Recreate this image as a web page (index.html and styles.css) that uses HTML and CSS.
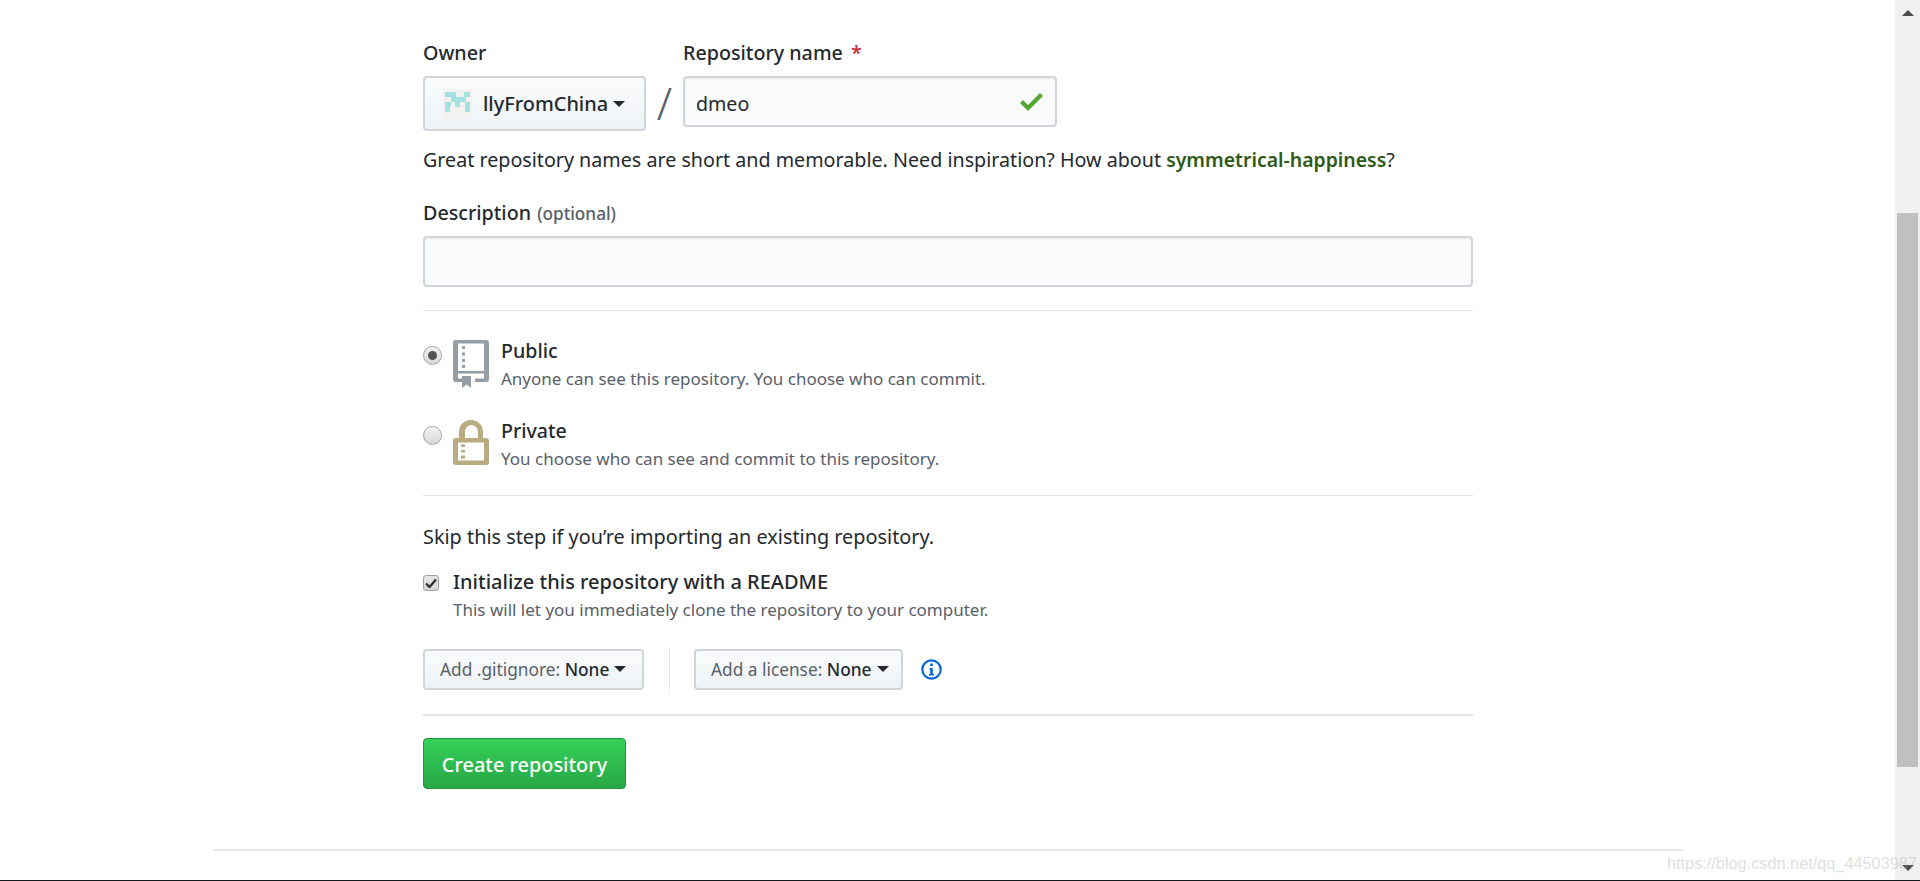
FILE: index.html
```html
<!DOCTYPE html>
<html lang="en">
<head>
<meta charset="utf-8">
<title>Create a new repository</title>
<link rel="stylesheet" href="styles.css">
</head>
<body>
<div class="page">
  <main class="content">
    <form class="form">
      <div class="owner-row">
        <div class="field owner-field">
          <div class="label">Owner</div>
          <div class="btn owner-btn">
            <svg class="avatar" viewBox="0 0 29 29" width="29" height="29" aria-hidden="true">
              <rect width="29" height="29" rx="2" fill="#f1f1f0"/>
              <g fill="#a3e0e2">
                <rect x="2" y="3" width="11" height="5"/><rect x="21" y="3" width="6" height="5"/>
                <rect x="8" y="8" width="15" height="5"/>
                <rect x="2" y="13" width="6" height="5"/><rect x="12" y="13" width="5" height="5"/><rect x="22" y="13" width="5" height="5"/>
                <rect x="2" y="18" width="5" height="5"/><rect x="22" y="18" width="5" height="5"/>
              </g>
            </svg>
            <span class="owner-name">llyFromChina</span><span class="caret"></span>
          </div>
        </div>
        <div class="slash">/</div>
        <div class="field repo-field">
          <div class="label">Repository name <span class="req">*</span></div>
          <div class="input repo-input">
            <span class="repo-value">dmeo</span>
            <svg class="check" viewBox="0 0 24 20" width="24" height="20" aria-hidden="true"><path d="M1 11l3-3 5 5L21 1l3 3L9 19z" fill="#55a532"/></svg>
          </div>
        </div>
      </div>
      <p class="hint">Great repository names are short and memorable. Need inspiration? How about <strong class="suggest">symmetrical-happiness</strong>?</p>
      <div class="label desc-label">Description <span class="optional">(optional)</span></div>
      <div class="input desc-input"></div>
      <hr class="rule rule-one">
      <div class="choice choice-public">
        <span class="radio radio-on"></span>
        <svg class="repo-icon" viewBox="0 0 36 48" width="36" height="48" aria-hidden="true">
          <path fill="#959da5" fill-rule="evenodd" d="M3 0h30a3 3 0 0 1 3 3v36a3 3 0 0 1-3 3H22v-3.500h9v-5H5v5h4V42H3a3 3 0 0 1-3-3V3a3 3 0 0 1 3-3zm2 3.500V31h26V3.500z"/>
          <path fill="#959da5" d="M9 36h9v12l-4.500-3.500L9 48z"/>
          <path fill="#959da5" d="M9 6h3v3H9zM9 12.500h3v3H9zM9 19h3v3H9zM9 25h3v3H9z"/>
        </svg>
        <div class="choice-text">
          <div class="choice-title">Public</div>
          <div class="note">Anyone can see this repository. You choose who can commit.</div>
        </div>
      </div>
      <div class="choice choice-private">
        <span class="radio"></span>
        <svg class="repo-icon" viewBox="0 0 36 45" width="36" height="45" aria-hidden="true">
          <path fill="#b8ac80" fill-rule="evenodd" d="M18 0c7 0 12 5 12 12v6h3a3 3 0 0 1 3 3v21a3 3 0 0 1-3 3H3a3 3 0 0 1-3-3V21a3 3 0 0 1 3-3h3v-6C6 5 11 0 18 0zm.500 5C15 5 12 8 12 12v6h13v-6c0-4-3-7-6.500-7zM5 22.500V40.500h26V22.500z"/>
          <path fill="#b8ac80" d="M8 24.500h4v2.500H8zM8 30h4v2.500H8zM8 35.500h4v3H8z"/>
        </svg>
        <div class="choice-text">
          <div class="choice-title">Private</div>
          <div class="note">You choose who can see and commit to this repository.</div>
        </div>
      </div>
      <hr class="rule rule-two">
      <p class="skip">Skip this step if you’re importing an existing repository.</p>
      <div class="readme">
        <span class="checkbox">
          <svg viewBox="0 0 12 10" width="12" height="10" aria-hidden="true"><path d="M1 5.500l3.500 3.500L11 1.500" fill="none" stroke="#333" stroke-width="2.400"/></svg>
        </span>
        <div class="choice-text">
          <div class="choice-title readme-title">Initialize this repository with a README</div>
          <div class="note">This will let you immediately clone the repository to your computer.</div>
        </div>
      </div>
      <div class="selects">
        <div class="btn select-btn gitignore-btn">Add .gitignore:&nbsp;<strong>None</strong><span class="caret"></span></div>
        <span class="vrule"></span>
        <div class="btn select-btn license-btn">Add a license:&nbsp;<strong>None</strong><span class="caret"></span></div>
        <svg class="info" viewBox="0 0 21 21" width="21" height="21" aria-hidden="true">
          <circle cx="10.500" cy="10.500" r="9.200" fill="none" stroke="#0366d6" stroke-width="2.200"/>
          <path fill="#0366d6" d="M9.200 4.500h2.600v2.600H9.200zM8.500 9h3.300v6h1.200v1.500H8v-1.500h1.200v-4.500h-.7z"/>
        </svg>
      </div>
      <hr class="rule rule-three">
      <div class="btn-create">Create repository</div>
    </form>
    <div class="footer-line"></div>
  </main>
  <aside class="scrollbar" aria-hidden="true">
    <div class="arrow-box"><span class="arrow-up"></span></div>
    <div class="track"><div class="thumb"></div></div>
    <div class="arrow-box"><span class="arrow-down"></span></div>
  </aside>
</div>
<div class="taskbar"></div>
<div class="watermark">https://blog.csdn.net/qq_44503987</div>
</body>
</html>
```

FILE: styles.css
```css
* { box-sizing: border-box; }
html, body { margin: 0; padding: 0; height: 881px; overflow: hidden; background: #fff; }
body {
  font-family: "Noto Sans", "Open Sans", sans-serif;
  font-size: 19.700px;
  color: #24292e;
  display: flex;
  flex-direction: column;
  position: relative;
}
.page { display: flex; height: 880px; }
.content { flex: 1; display: flex; flex-direction: column; min-width: 0; }
.form { width: 1050px; margin-left: 423px; padding-top: 39px; }
.owner-row { display: flex; align-items: flex-start; }
.field { display: flex; flex-direction: column; }
.label { font-weight: 500; line-height: 28px; height: 28px; margin-bottom: 9px; }
.req { color: #cb2431; margin-left: 3px; }
.btn {
  border: 2px solid #d1d5da;
  border-radius: 4px;
  background: linear-gradient(#fafbfc, #eff3f6);
  display: flex;
  align-items: center;
}
.owner-btn { width: 223px; height: 55px; padding-left: 18px; font-weight: 500; font-size: 19.900px; }
.avatar { margin-right: 11px; flex: none; }
.owner-name { white-space: nowrap; }
.caret {
  width: 0; height: 0;
  border: 6px solid transparent;
  border-top-color: #24292e;
  border-bottom-width: 0;
  margin-left: 5px;
  flex: none;
}
.slash { width: 37px; margin-top: 39px; text-align: center; font-size: 44px; line-height: 50px; color: #586069; font-weight: 300; }
.input {
  border: 2px solid #d1d5da;
  border-radius: 4px;
  background: #fafbfc;
  box-shadow: inset 0 1px 2px rgba(27, 31, 35, .075);
}
.repo-input { width: 374px; height: 51px; display: flex; align-items: center; justify-content: space-between; padding: 0 12px 0 11px; font-size: 19.600px; }
.repo-value { padding-top: 3px; }
.check { flex: none; }
.hint { margin: 15px 0 0; line-height: 28px; height: 28px; white-space: nowrap; }
.suggest { color: #2f5a16; font-weight: 600; font-size: 19.450px; }
.desc-label { margin: 25px 0 9px; }
.optional { font-size: 17.200px; color: #586069; margin-left: 1px; }
.desc-input { height: 51px; }
.rule { border: 0; height: 1px; background: #e1e4e8; margin: 0; }
.rule-one { margin-top: 23px; }
.choice { display: flex; align-items: flex-start; }
.choice-public { margin-top: 29px; height: 48px; }
.choice-private { margin-top: 32px; height: 46px; }
.radio {
  width: 19px; height: 19px; border-radius: 50%;
  border: 1px solid #a5a5a5;
  background: linear-gradient(#f2f2f2, #d8d8d8);
  margin: 6px 11px 0 0;
  flex: none;
  display: flex; align-items: center; justify-content: center;
}
.radio-on::after { content: ""; width: 9px; height: 9px; border-radius: 50%; background: #555; }
.repo-icon { flex: none; margin-right: 12px; }
.choice-text { display: flex; flex-direction: column; }
.choice-title { font-weight: 500; line-height: 24px; margin-top: -1px; font-size: 19.600px; }
.readme-title { font-size: 20px; margin-top: 0; }
.note { font-size: 17px; line-height: 20px; color: #586069; margin-top: 6px; white-space: nowrap; }
.rule-two { margin-top: 29px; }
.skip { margin: 27px 0 0; line-height: 28px; font-size: 19.850px; }
.readme { display: flex; align-items: flex-start; margin-top: 19px; }
.checkbox {
  width: 16px; height: 16px; border-radius: 3px;
  border: 1px solid #a0a0a0;
  background: linear-gradient(#e8e8e8, #d6d6d6);
  margin: 5px 14px 0 0;
  display: flex; align-items: center; justify-content: center;
  flex: none;
}
.selects { display: flex; align-items: center; margin-top: 28px; height: 42px; }
.select-btn { height: 41px; padding-left: 15px; font-size: 17.300px; color: #586069; white-space: nowrap; }
.select-btn strong { color: #24292e; font-weight: 500; }
.gitignore-btn { width: 221px; }
.license-btn { width: 209px; }
.vrule { width: 1px; height: 42px; background: #e1e4e8; margin: 0 24px 0 25px; flex: none; }
.info { margin-left: 18px; flex: none; }
.rule-three { height: 2px; margin-top: 24px; }
.btn-create {
  width: 203px; height: 51px;
  margin-top: 22px;
  padding-top: 2px;
  border: 1px solid #258f3e;
  border-radius: 4px;
  background: linear-gradient(#34d058, #28a745);
  color: #fff;
  font-weight: 500;
  font-size: 19.900px;
  display: flex; align-items: center; justify-content: center;
}
.footer-line { height: 2px; background: #e8e8ee; width: 1471px; margin: 60px 0 0 213px; }
.scrollbar { width: 25px; height: 880px; background: #f0f0f0; display: flex; flex-direction: column; flex: none; }
.arrow-box { height: 25px; display: flex; align-items: center; justify-content: center; flex: none; }
.arrow-up { width: 0; height: 0; border: 6px solid transparent; border-bottom-color: #4d4d4d; border-top-width: 0; }
.arrow-down { width: 0; height: 0; border: 6px solid transparent; border-top-color: #4d4d4d; border-bottom-width: 0; }
.track { flex: 1; padding: 188px 2px 0; }
.thumb { height: 554px; background: #c0c0c0; }
.taskbar { height: 1px; background: #14181a; }
.watermark {
  position: absolute;
  left: 1667px;
  top: 851px;
  font-family: "Liberation Sans", sans-serif;
  font-size: 16.300px;
  line-height: 24px;
  color: rgba(170, 170, 170, .4);
  white-space: nowrap;
}
```
